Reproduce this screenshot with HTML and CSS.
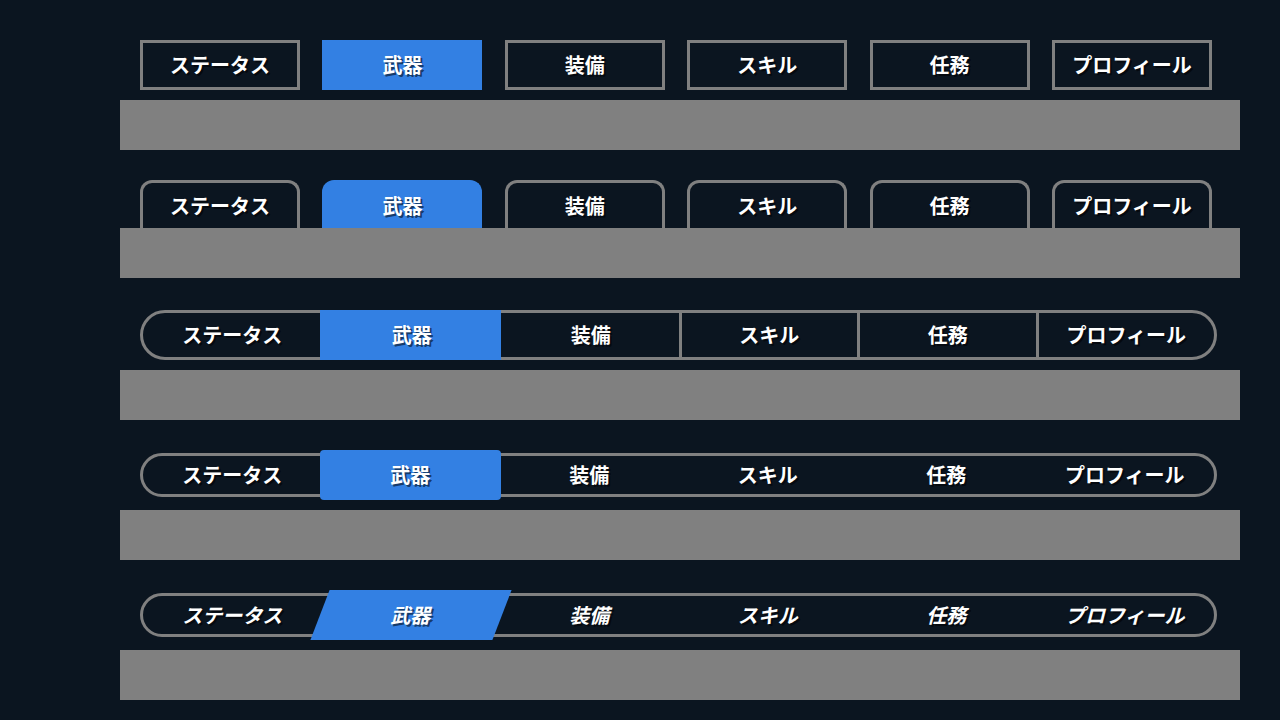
FILE: index.html
```html
<!DOCTYPE html>
<html lang="ja">
<head>
<meta charset="utf-8">
<title>Tabs</title>
<link rel="stylesheet" href="styles.css">
</head>
<body>
<main class="page">
  <section class="demo demo-boxed">
    <nav class="tabs tabs-boxed">
      <span class="tab label">ステータス</span>
      <span class="tab label is-active">武器</span>
      <span class="tab label">装備</span>
      <span class="tab label">スキル</span>
      <span class="tab label">任務</span>
      <span class="tab label">プロフィール</span>
    </nav>
    <div class="panel"></div>
  </section>

  <section class="demo demo-folder">
    <nav class="tabs tabs-folder">
      <span class="tab label">ステータス</span>
      <span class="tab label is-active">武器</span>
      <span class="tab label">装備</span>
      <span class="tab label">スキル</span>
      <span class="tab label">任務</span>
      <span class="tab label">プロフィール</span>
    </nav>
    <div class="panel"></div>
  </section>

  <section class="demo demo-segmented">
    <nav class="segmented">
      <span class="seg label">ステータス</span>
      <span class="seg label is-active">武器</span>
      <span class="seg label">装備</span>
      <span class="seg label">スキル</span>
      <span class="seg label">任務</span>
      <span class="seg label">プロフィール</span>
    </nav>
    <div class="panel"></div>
  </section>

  <section class="demo demo-pill">
    <nav class="pill">
      <span class="pill-item label">ステータス</span>
      <span class="pill-item label is-active">武器</span>
      <span class="pill-item label">装備</span>
      <span class="pill-item label">スキル</span>
      <span class="pill-item label">任務</span>
      <span class="pill-item label">プロフィール</span>
    </nav>
    <div class="panel"></div>
  </section>

  <section class="demo demo-slant">
    <nav class="pill pill-slant">
      <span class="pill-item label">ステータス</span>
      <span class="pill-item label is-active">武器</span>
      <span class="pill-item label">装備</span>
      <span class="pill-item label">スキル</span>
      <span class="pill-item label">任務</span>
      <span class="pill-item label">プロフィール</span>
    </nav>
    <div class="panel"></div>
  </section>
</main>
</body>
</html>
```

FILE: styles.css
```css
html, body {
  margin: 0;
  background: #0b1520;
}

body {
  font-family: "Noto Sans CJK JP", "Noto Sans", sans-serif;
}

.page {
  width: 1120px;
  padding: 40px 0 0 120px;
}

.demo {
  margin-bottom: 30px;
}

.panel {
  height: 50px;
  background: #808080;
}

.label {
  font-size: 20px;
  font-weight: 700;
  line-height: 1;
  color: #ffffff;
  text-shadow: 2px 2px 0 rgba(0, 0, 0, 0.55);
  white-space: nowrap;
}

/* ---- Row 1 & 2: separate tabs ---- */
.tabs {
  display: flex;
  gap: 22.4px;
  padding-left: 20px;
}

.tab {
  box-sizing: border-box;
  width: 160px;
  display: flex;
  align-items: center;
  justify-content: center;
  border: 3px solid #808080;
}

.tab.is-active {
  background: #3380e3;
  border-color: #3380e3;
}

.tabs-boxed {
  margin-bottom: 10px;
}

.tabs-boxed .tab {
  height: 50px;
}

.demo-folder {
  margin-bottom: 32px;
}

.tabs-folder .tab {
  height: 48px;
  border-bottom: 0;
  border-radius: 12px 12px 0 0;
}

/* ---- Row 3: segmented ---- */
.segmented {
  box-sizing: border-box;
  width: 1077px;
  height: 50px;
  margin: 0 0 10px 20px;
  border: 3px solid #808080;
  border-radius: 25px;
  display: grid;
  grid-template-columns: repeat(6, 1fr);
}

.seg {
  box-sizing: border-box;
  display: flex;
  align-items: center;
  justify-content: center;
  border-left: 3px solid #808080;
}

.seg:first-child {
  border-left: 0;
}

.seg.is-active {
  position: relative;
  z-index: 1;
  margin: -3px -1px -3px -2px;
  background: #3380e3;
  border-left-color: #3380e3;
}

.seg.is-active + .seg {
  border-left-color: transparent;
}

/* ---- Row 4 & 5: pill ---- */
.demo-pill,
.demo-slant {
  padding-top: 3px;
}

.pill {
  box-sizing: border-box;
  width: 1077px;
  height: 44px;
  margin: 0 0 13px 20px;
  border: 3px solid #808080;
  border-radius: 22px;
  display: grid;
  grid-template-columns: repeat(6, 1fr);
}

.pill-item {
  display: flex;
  align-items: center;
  justify-content: center;
}

.pill-item.is-active {
  position: relative;
  z-index: 1;
  margin: -6px -1px -6px -2px;
  background: #3380e3;
  border-radius: 4px;
}

.pill-slant .pill-item {
  font-style: italic;
}

.pill-slant .pill-item.is-active {
  background: transparent;
  border-radius: 0;
  isolation: isolate;
}

.pill-slant .pill-item.is-active::before {
  content: "";
  position: absolute;
  inset: 0;
  z-index: -1;
  background: #3380e3;
  transform: skewX(-21deg);
}
```
